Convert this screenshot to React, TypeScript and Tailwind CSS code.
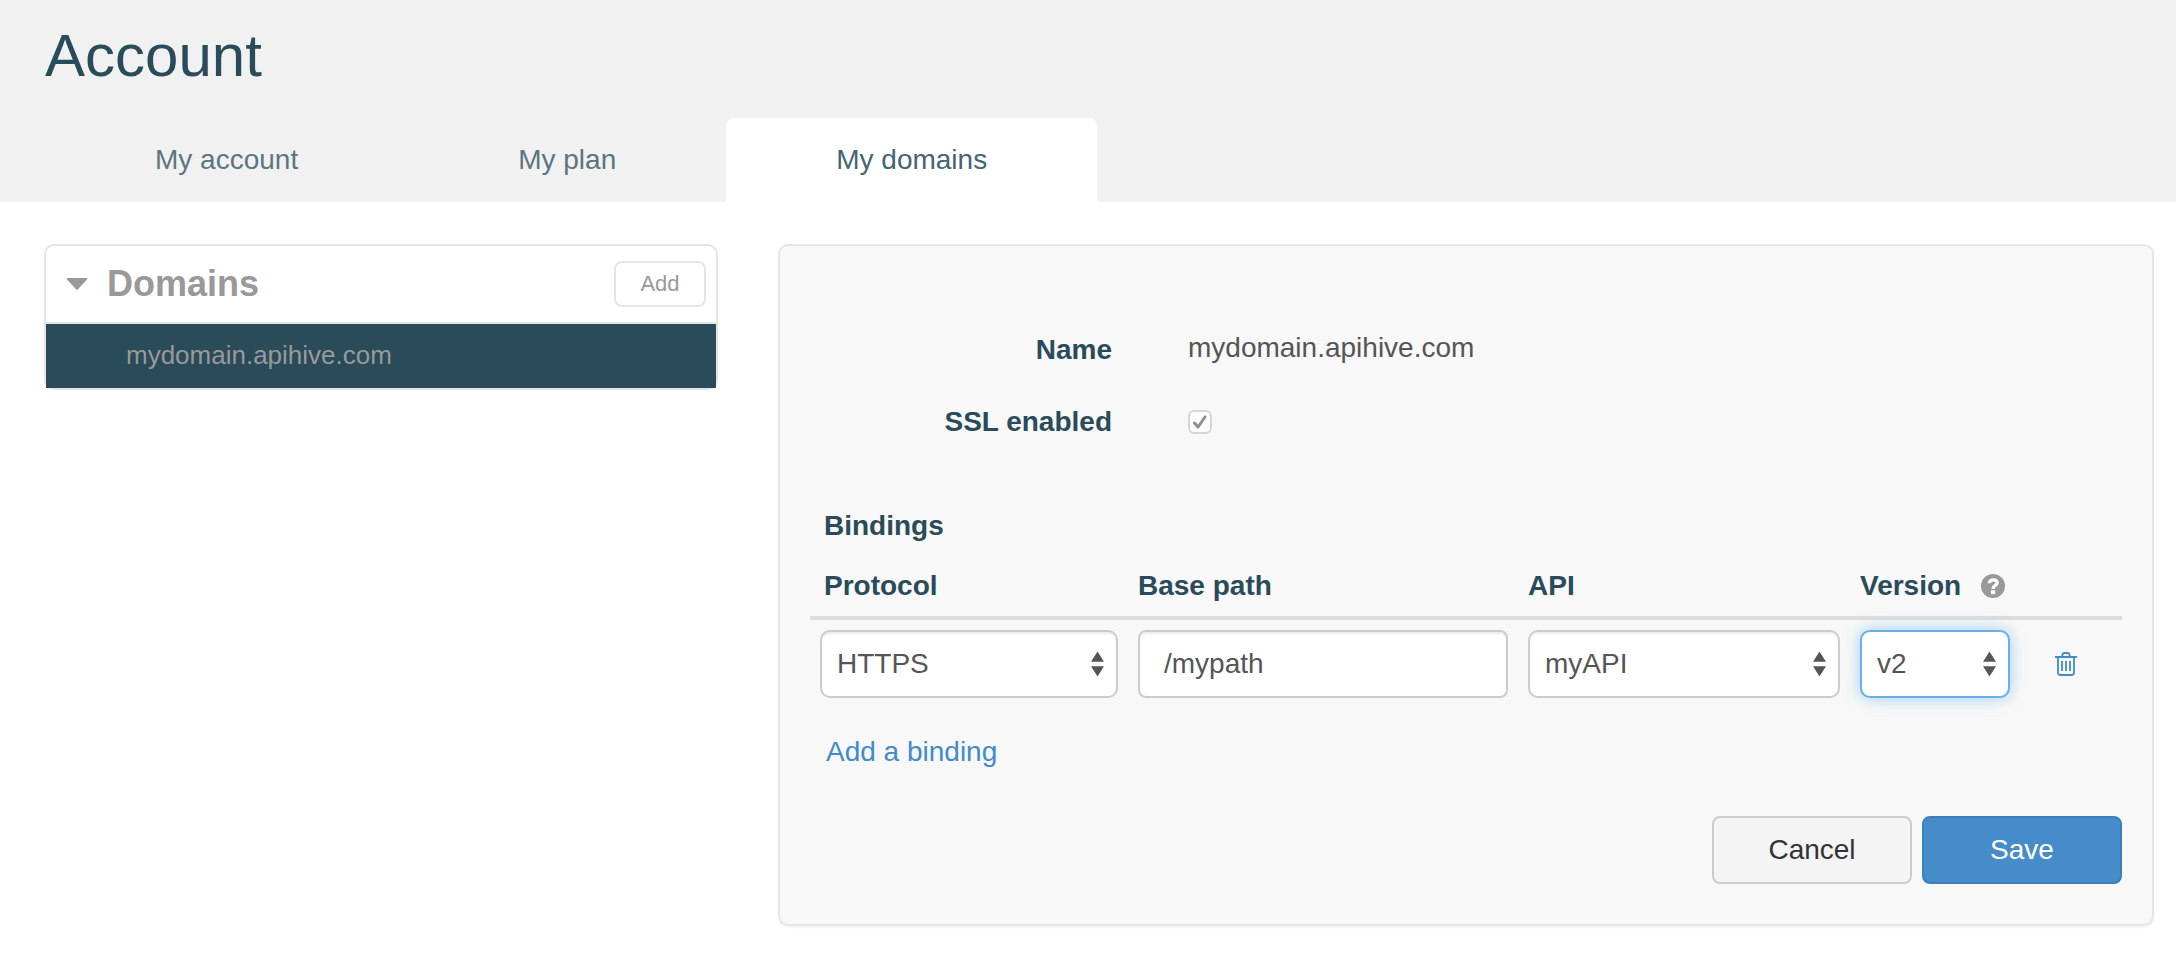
import { useState } from "react";
import type { ReactNode, SelectHTMLAttributes } from "react";

const tabs = ["My account", "My plan", "My domains"];

function UpDownArrows() {
  return (
    <svg
      viewBox="0 0 13 25"
      aria-hidden="true"
      className="pointer-events-none absolute top-1/2 right-3.5 h-[25px] w-[13px] -translate-y-1/2 fill-[#555]"
    >
      <path d="M6.5 0 13 10.200H0z" />
      <path d="M6.5 25 13 14.800H0z" />
    </svg>
  );
}

function TrashIcon() {
  return (
    <svg viewBox="0 0 22 24" aria-hidden="true" className="h-6 w-[22px] fill-none stroke-[#428bca]">
      <path d="M0 5h22" strokeWidth="2" />
      <path d="M7 5 7.500 2.500Q7.800 1 9.500 1h3Q14.200 1 14.500 2.500L15 5" strokeWidth="1.800" />
      <path d="M3 5v15.500Q3 23 5.500 23h11Q19 23 19 20.500V5" strokeWidth="1.800" />
      <path d="M7 9v10M11 9v10M15 9v10" strokeWidth="1.800" />
    </svg>
  );
}

function HelpIcon() {
  return (
    <svg viewBox="0 0 24 24" aria-hidden="true" className="size-6">
      <circle cx="12" cy="12" r="12" fill="#999" />
      <path
        d="M8.300 9.300C8.300 4.800 16.200 4.800 16.200 8.600C16.200 11.600 12 11.300 12 15"
        fill="none"
        stroke="#fff"
        strokeWidth="3.400"
      />
      <rect x="10" y="16.300" width="4.200" height="3.800" fill="#fff" />
    </svg>
  );
}

function Select({
  children,
  focused = false,
  ...rest
}: SelectHTMLAttributes<HTMLSelectElement> & { children: ReactNode; focused?: boolean }) {
  return (
    <div className="relative">
      <select
        {...rest}
        className={
          focused
            ? "block h-[68px] w-full appearance-none rounded-[10px] border-2 border-[#66afe9] bg-white pr-8 pl-[15px] text-[#555] shadow-[0_0_16px_rgba(102,175,233,0.6)] outline-none"
            : "block h-[68px] w-full appearance-none rounded-[10px] border-2 border-[#ccc] bg-white pr-8 pl-[15px] text-[#555] shadow-[inset_0_2px_2px_rgba(0,0,0,0.075)] outline-none"
        }
      >
        {children}
      </select>
      <UpDownArrows />
    </div>
  );
}

function Header() {
  return (
    <header className="bg-[#f1f1f1] px-[45px] pt-[26px]">
      <h1 className="mb-8 text-[60px] leading-[60px] text-[#294b5a]">Account</h1>
      <nav className="flex">
        {tabs.map((tab) => (
          <a
            key={tab}
            href="#"
            aria-current={tab === "My domains" ? "page" : undefined}
            className={
              tab === "My domains"
                ? "rounded-t-lg bg-white px-[110px] py-[22px] text-[#466472]"
                : "px-[110px] py-[22px] text-[#5b7680]"
            }
          >
            {tab}
          </a>
        ))}
      </nav>
    </header>
  );
}

function Sidebar() {
  return (
    <aside className="rounded-[10px] border-2 border-[#e5e5e5] bg-white text-[#999]">
      <div className="flex h-[78px] items-center border-b-2 border-[#e5e5e5] pr-2.5 pl-5">
        <svg viewBox="0 0 22 12" aria-hidden="true" className="h-3 w-[22px] fill-[#999]">
          <path d="M1.500 0h19q1.500 0 .5 1.500L12 11.300q-1 1-2 0L1 1.500Q0 0 1.500 0z" />
        </svg>
        <h2 className="ml-[19px] text-4xl font-bold">Domains</h2>
        <button
          type="button"
          className="ml-auto h-[46px] w-[92px] rounded-lg border-2 border-[#e5e5e5] bg-white text-[22px]"
        >
          Add
        </button>
      </div>
      <ul className="bg-[#294b5a]">
        <li>
          <a href="#" className="block px-20 pt-[11px] pb-[13px] text-[26px] leading-10">
            mydomain.apihive.com
          </a>
        </li>
      </ul>
    </aside>
  );
}

function DomainForm() {
  const [protocol, setProtocol] = useState("HTTPS");
  const [path, setPath] = useState("/mypath");
  const [api, setApi] = useState("myAPI");
  const [version, setVersion] = useState("v2");

  return (
    <form
      onSubmit={(e) => e.preventDefault()}
      className="rounded-[10px] border-2 border-[#e5e5e5] bg-[#f8f8f8] px-[30px] pt-[84px] pb-10 shadow-[0_2px_2px_rgba(0,0,0,0.04)]"
    >
      <div className="grid grid-cols-[302px_1fr] gap-x-[76px] gap-y-8">
        <span className="text-right font-bold text-[#294b5a]">Name</span>
        <span className="leading-9 text-[#555]">mydomain.apihive.com</span>
        <label htmlFor="ssl" className="text-right font-bold text-[#294b5a]">
          SSL enabled
        </label>
        <div className="grid w-6 items-center">
          <input
            id="ssl"
            type="checkbox"
            defaultChecked
            className="peer col-start-1 row-start-1 size-6 appearance-none rounded-md border-2 border-[#d6d6d6] bg-[#fcfcfc]"
          />
          <svg
            viewBox="0 0 24 24"
            aria-hidden="true"
            className="pointer-events-none invisible col-start-1 row-start-1 size-6 fill-none stroke-[#8f8f8f] stroke-3 peer-checked:visible"
          >
            <path d="M6.500 13 10 17 17 7" strokeLinecap="round" strokeLinejoin="round" />
          </svg>
        </div>
      </div>

      <h3 className="mt-16 mb-5 pl-3.5 font-bold text-[#294b5a]">Bindings</h3>
      <table className="w-full table-fixed border-collapse">
        <colgroup>
          <col className="w-[318px]" />
          <col />
          <col className="w-[332px]" />
          <col className="w-[170px]" />
          <col className="w-[102px]" />
        </colgroup>
        <thead>
          <tr className="border-b-4 border-[#ddd] text-left text-[#294b5a]">
            <th className="p-0 pb-2.5 pl-3.5">Protocol</th>
            <th className="p-0 pb-2.5 pl-2.5">Base path</th>
            <th className="p-0 pb-2.5 pl-2.5">API</th>
            <th className="p-0 pb-2.5 pl-2.5 whitespace-nowrap">
              <span className="flex items-center gap-5">
                Version
                <button type="button" aria-label="Version help" className="shrink-0">
                  <HelpIcon />
                </button>
              </span>
            </th>
            <th className="p-0" />
          </tr>
        </thead>
        <tbody>
          <tr>
            <td className="px-2.5 pt-2.5">
              <Select aria-label="Protocol" value={protocol} onChange={(e) => setProtocol(e.target.value)}>
                <option>HTTPS</option>
                <option>HTTP</option>
              </Select>
            </td>
            <td className="px-2.5 pt-2.5">
              <input
                type="text"
                aria-label="Base path"
                value={path}
                onChange={(e) => setPath(e.target.value)}
                className="block h-[68px] w-full rounded-lg border-2 border-[#ccc] bg-white px-6 text-[#555] shadow-[inset_0_2px_2px_rgba(0,0,0,0.075)] outline-none"
              />
            </td>
            <td className="px-2.5 pt-2.5">
              <Select aria-label="API" value={api} onChange={(e) => setApi(e.target.value)}>
                <option>myAPI</option>
              </Select>
            </td>
            <td className="px-2.5 pt-2.5">
              <Select focused aria-label="Version" value={version} onChange={(e) => setVersion(e.target.value)}>
                <option>v2</option>
                <option>v1</option>
              </Select>
            </td>
            <td className="pt-2.5 pl-[35px]">
              <button type="button" aria-label="Delete binding" className="block">
                <TrashIcon />
              </button>
            </td>
          </tr>
        </tbody>
      </table>
      <a href="#" className="mt-[34px] ml-4 inline-block text-[#428bca]">
        Add a binding
      </a>

      <div className="mt-11 flex justify-end gap-2.5">
        <button
          type="button"
          className="h-[68px] w-[200px] rounded-lg border-2 border-[#ccc] bg-[#f4f4f4] text-[#333]"
        >
          Cancel
        </button>
        <button
          type="submit"
          className="h-[68px] w-[200px] rounded-lg border-2 border-[#3b80bd] bg-[#468cc9] text-white"
        >
          Save
        </button>
      </div>
    </form>
  );
}

export default function App() {
  return (
    <div className="min-h-screen bg-white font-['Liberation_Sans',Arial,sans-serif] text-[28px] leading-10">
      <Header />
      <main className="grid grid-cols-[674fr_1376fr] items-start gap-[60px] pt-[42px] pr-[22px] pb-7 pl-11">
        <Sidebar />
        <DomainForm />
      </main>
    </div>
  );
}
